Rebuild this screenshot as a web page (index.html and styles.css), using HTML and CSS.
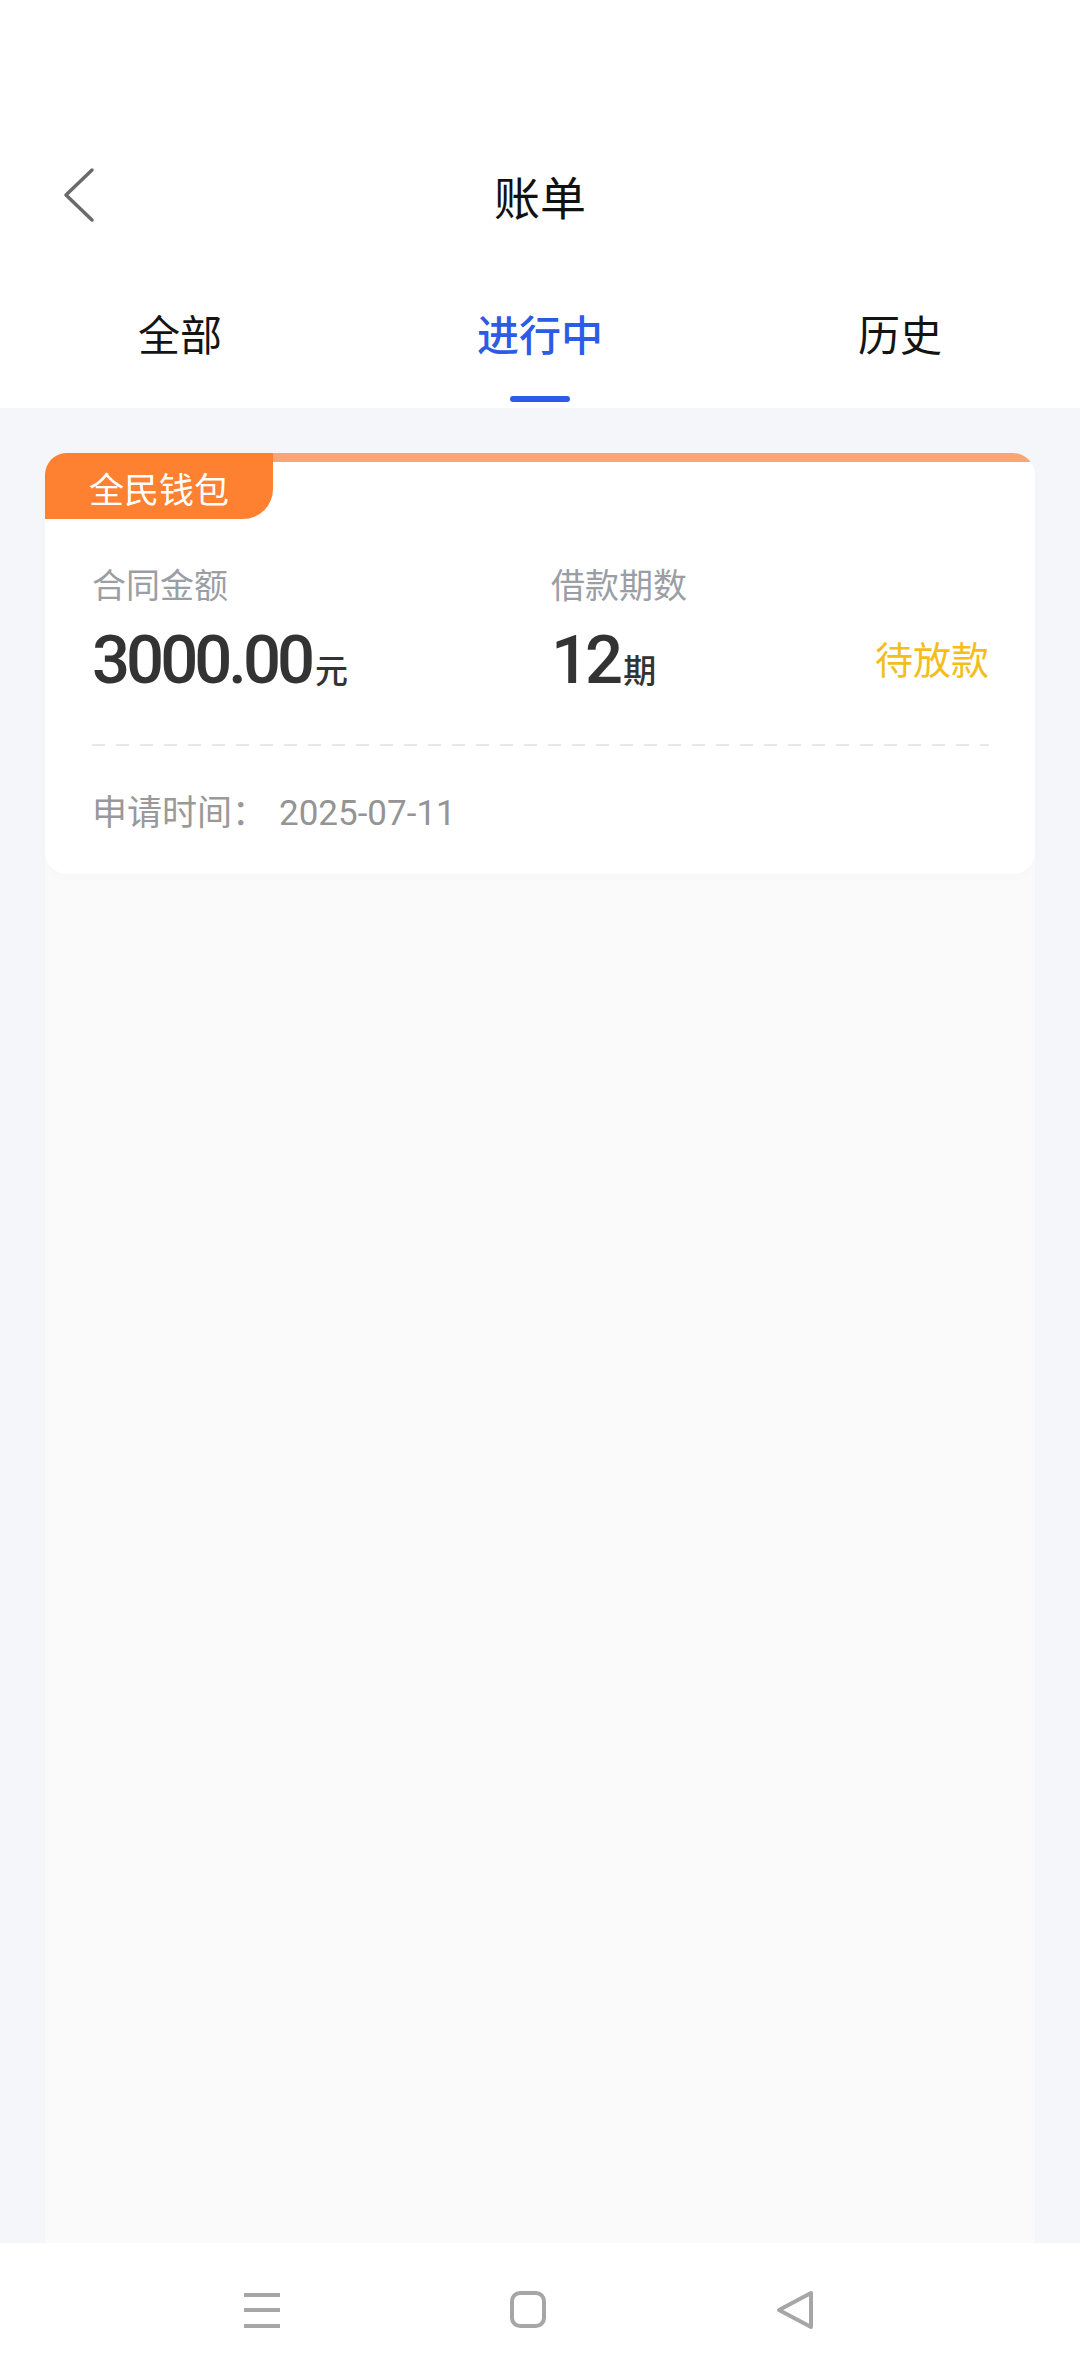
FILE: index.html
```html
<!DOCTYPE html>
<html lang="zh-CN">
<head>
<meta charset="utf-8">
<title>账单</title>
<link rel="stylesheet" href="styles.css">
</head>
<body>
<div class="page">
  <header class="header">
    <div class="statusbar"></div>
    <div class="titlebar">
      <div class="back">
        <svg width="32" height="56" viewBox="0 0 32 56"><polyline points="29,3 3,28 29,53" fill="none" stroke="#6a6a6a" stroke-width="3.5" stroke-linecap="round" stroke-linejoin="round"/></svg>
      </div>
      <h1 class="title">账单</h1>
      <div></div>
    </div>
    <nav class="tabs">
      <div class="tab"><span class="tab-label">全部</span><span class="tab-line"></span></div>
      <div class="tab tab-active"><span class="tab-label">进行中</span><span class="tab-line"></span></div>
      <div class="tab"><span class="tab-label">历史</span><span class="tab-line"></span></div>
    </nav>
  </header>

  <main class="content">
    <div class="list">
      <section class="card">
        <div class="tag">全民钱包</div>
        <div class="card-body">
          <div class="info">
            <div class="label">合同金额</div>
            <div class="label">借款期数</div>
            <div></div>
            <div class="value"><span class="num">3000.00</span><span class="unit">元</span></div>
            <div class="value"><span class="num">12</span><span class="unit">期</span></div>
            <div class="status">待放款</div>
          </div>
          <div class="divider"></div>
          <div class="date-row"><span class="date-label">申请时间：</span><span class="date">2025-07-11</span></div>
        </div>
      </section>
      <div class="list-fill"></div>
    </div>
  </main>

  <footer class="navbar">
    <svg class="nav-icon" width="36" height="36" viewBox="0 0 36 36"><rect x="0" y="1" width="36" height="4" fill="#a6a6a6"/><rect x="0" y="16" width="36" height="4" fill="#a6a6a6"/><rect x="0" y="32" width="36" height="4" fill="#a6a6a6"/></svg>
    <svg class="nav-icon" width="36" height="37" viewBox="0 0 36 37"><rect x="2" y="2" width="32" height="33" rx="8" fill="none" stroke="#a6a6a6" stroke-width="4"/></svg>
    <svg class="nav-icon" width="38" height="40" viewBox="0 0 38 40"><path d="M35 3 L3 20 L35 37 Z" fill="none" stroke="#a6a6a6" stroke-width="4" stroke-linejoin="round"/></svg>
  </footer>
</div>
</body>
</html>
```

FILE: styles.css
```css
* { box-sizing: border-box; }
html, body { margin: 0; padding: 0; }
body {
  width: 1080px;
  height: 2376px;
  background: #f5f6fa;
  font-family: "Noto Sans CJK SC", "Noto Sans", sans-serif;
  color: #111;
}
.page {
  display: flex;
  flex-direction: column;
  height: 2376px;
}
.header { background: #fff; }
.statusbar { height: 140px; }
.titlebar {
  height: 110px;
  display: grid;
  grid-template-columns: 1fr auto 1fr;
  align-items: center;
}
.back { padding-left: 63px; display: flex; align-items: center; }
.back svg { display: block; }
.title {
  margin: 0;
  font-size: 46px;
  font-weight: 400;
  line-height: 110px;
  color: #111;
}
.tabs {
  height: 158px;
  display: grid;
  grid-template-columns: repeat(3, 1fr);
}
.tab {
  display: flex;
  flex-direction: column;
  align-items: center;
  padding-top: 58px;
}
.tab-label {
  font-size: 42px;
  line-height: 50px;
  color: #141414;
}
.tab-line {
  margin-top: 38px;
  width: 60px;
  height: 6px;
  border-radius: 3px;
  background: transparent;
}
.tab-active .tab-label { color: #2c5be6; font-weight: 500; }
.tab-active .tab-line { background: #2c5be6; }

.content {
  flex: 1;
  display: flex;
  flex-direction: column;
  padding: 45px 45px 0;
}
.list {
  flex: 1;
  display: flex;
  flex-direction: column;
  background: linear-gradient(to bottom, transparent 0 380px, #fafafa 380px);
}
.card {
  background: linear-gradient(#fda570 0 9px, #fff 9px);
  border-radius: 22px;
  overflow: hidden;
  box-shadow: 0 4px 8px rgba(0, 0, 0, 0.015);
}
.tag {
  width: 228px;
  height: 66px;
  background: #fd8130;
  border-bottom-right-radius: 30px;
  color: #fff;
  font-size: 35px;
  display: flex;
  align-items: center;
  justify-content: center;
  padding-top: 2px;
}
.card-body { padding: 42px 46px 37px 47px; }
.info {
  display: grid;
  grid-template-columns: 459px 1fr auto;
  row-gap: 20px;
}
.label {
  font-size: 34px;
  line-height: 46px;
  color: #9b9ea4;
}
.value {
  display: flex;
  align-items: baseline;
  line-height: 66px;
  color: #333;
}
.num {
  font-family: Roboto, "Noto Sans", sans-serif;
  font-size: 67px;
  font-weight: 500;
  letter-spacing: -4px;
  margin-right: 4px;
}
.unit {
  font-size: 33px;
  font-weight: 500;
}
.status {
  align-self: start;
  margin-top: 8px;
  font-size: 38px;
  line-height: 46px;
  color: #f3be1c;
}
.divider {
  margin-top: 42px;
  height: 2px;
  background: repeating-linear-gradient(90deg, #e8e8e8 0 13px, transparent 13px 24px);
}
.date-row {
  margin-top: 41px;
  line-height: 46px;
  color: #999;
  display: flex;
  align-items: baseline;
}
.date-label { font-size: 35px; }
.date {
  font-family: Roboto, "Noto Sans", sans-serif;
  font-size: 35px;
  margin-left: 12px;
  color: #949494;
}
.list-fill { flex: 1; }

.navbar {
  height: 133px;
  background: #fff;
  display: flex;
  align-items: center;
  padding-left: 244px;
  gap: 230px;
}
.nav-icon { display: block; }
```
